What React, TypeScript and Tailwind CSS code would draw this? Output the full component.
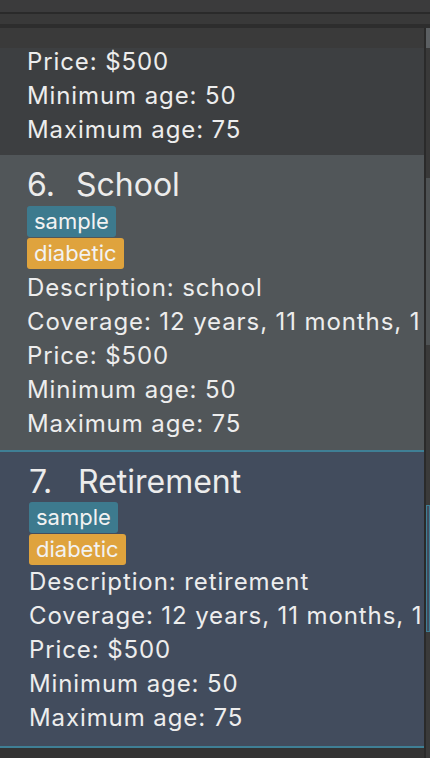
import React from 'react';

interface Policy {
  index: number;
  title: string;
  tags: { label: string; kind: 'sample' | 'diabetic' }[];
  lines: string[];
}

const policies: Policy[] = [
  {
    index: 6,
    title: 'School',
    tags: [
      { label: 'sample', kind: 'sample' },
      { label: 'diabetic', kind: 'diabetic' },
    ],
    lines: [
      'Description: school',
      'Coverage: 12 years, 11 months, 1',
      'Price: $500',
      'Minimum age: 50',
      'Maximum age: 75',
    ],
  },
  {
    index: 7,
    title: 'Retirement',
    tags: [
      { label: 'sample', kind: 'sample' },
      { label: 'diabetic', kind: 'diabetic' },
    ],
    lines: [
      'Description: retirement',
      'Coverage: 12 years, 11 months, 1',
      'Price: $500',
      'Minimum age: 50',
      'Maximum age: 75',
    ],
  },
];

const Tag: React.FC<{ label: string; kind: 'sample' | 'diabetic' }> = ({ label, kind }) => (
  <span
    className={`self-start h-[31px] px-[7px] rounded-[3px] text-[22px] leading-[31px] text-[#f2f2f2] ${
      kind === 'sample' ? 'bg-[#3d7a8e]' : 'bg-[#dfa33d]'
    }`}
  >
    {label}
  </span>
);

const Line: React.FC<{ text: string }> = ({ text }) => (
  <div className="text-[24px] leading-[34px] tracking-[0.9px] text-[#ededed]">{text}</div>
);

const PolicyCard: React.FC<{ policy: Policy; selected?: boolean }> = ({ policy, selected }) => (
  <div
    className={`overflow-hidden whitespace-nowrap ${
      selected
        ? 'h-[298px] pl-[29px] pt-[10px] bg-[#424c5d] border-y-2 border-[#3f7f95]'
        : 'h-[295px] pl-[27px] pt-[10px] bg-[#515659]'
    }`}
  >
    <div className="flex items-center h-[40px] text-[32px] leading-[40px] text-[#ececec]">
      <span className="w-[49px]">{policy.index}.</span>
      <span>{policy.title}</span>
    </div>
    <div className={`flex flex-col gap-[1px] ${selected ? 'mt-0 mb-0' : 'mt-[1px] mb-[2px]'}`}>
      {policy.tags.map((t) => (
        <Tag key={t.label} label={t.label} kind={t.kind} />
      ))}
    </div>
    {policy.lines.map((line) => (
      <Line key={line} text={line} />
    ))}
  </div>
);

export default function App() {
  return (
    <div
      className="w-[430px] h-[758px] overflow-hidden bg-[#3a3a3a] flex flex-col"
      style={{ fontFamily: 'Inter, "Noto Sans", sans-serif' }}
    >
      {/* window chrome */}
      <div className="h-[12px] bg-[#3b3b3c]" />
      <div className="h-[2px] bg-[#2a2a2a]" />
      <div className="h-[10px] bg-[#393939]" />
      <div className="h-[4px] bg-[#2d2d2d]" />

      <div className="flex flex-1">
        {/* list */}
        <div className="w-[424px] flex flex-col">
          <div className="h-[20px] bg-[#3a3a3a]" />
          <div className="h-[107px] overflow-hidden bg-[#3d3f41] pl-[27px] whitespace-nowrap">
            <div className="-mt-[3px]">
              {['Price: $500', 'Minimum age: 50', 'Maximum age: 75'].map((line) => (
                <Line key={line} text={line} />
              ))}
            </div>
          </div>
          <PolicyCard policy={policies[0]} />
          <PolicyCard policy={policies[1]} selected />
          <div className="flex-1 bg-[#333333]" />
        </div>

        {/* scrollbars */}
        <div className="w-[2px] bg-[#2a2a2a]" />
        <div className="w-[4px] flex flex-col">
          <div className="h-[20px] bg-[#5b5f62]" />
          <div className="h-[130px] bg-[#393939]" />
          <div className="h-[167px] bg-[#4e5254]" />
          <div className="h-[160px] bg-[#3a3a3a]" />
          <div className="h-[127px] bg-[#424c5d] border border-[#3f7f95]" />
          <div className="flex-1 bg-[#3a3a3a]" />
        </div>
      </div>
    </div>
  );
}
